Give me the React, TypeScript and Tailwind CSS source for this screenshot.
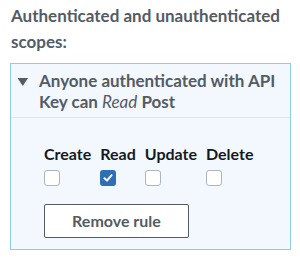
import React from "react";

function Box({ checked }: { checked?: boolean }) {
  if (checked) {
    return (
      <div className="w-[16px] h-[16px] rounded-[3px] bg-[#2f6fb5] flex items-center justify-center">
        <svg width="12" height="12" viewBox="0 0 12 12">
          <path d="M2.5 6.2 L5 8.6 L9.6 3.2" fill="none" stroke="#fff" strokeWidth="2" strokeLinecap="round" strokeLinejoin="round" />
        </svg>
      </div>
    );
  }
  return <div className="w-[16px] h-[16px] rounded-[3px] border border-[#aab7b8] bg-white" />;
}

export default function App() {
  const cols = [
    { label: "Create", checked: false },
    { label: "Read", checked: true },
    { label: "Update", checked: false },
    { label: "Delete", checked: false },
  ];
  return (
    <div className="w-[300px] h-[260px] bg-white pt-[3px] px-[10px] text-[#545b64] font-['Lato',sans-serif]">
      <div className="pl-[1px] text-[17px] font-bold leading-[26px]">
        Authenticated and unauthenticated scopes:
      </div>
      <div className="mt-[8px] w-[281px] border border-[#8dcde6] bg-[#f2f8fd]">
        <div className="flex pl-[6px] pr-[8px] pt-[6px] pb-[5px] border-b border-[#dde6ec]">
          <svg width="12" height="12" viewBox="0 0 12 12" className="mt-[6px] mr-[10px] shrink-0">
            <path d="M0.5 2 L11 2 L5.75 10 Z" fill="#545b64" />
          </svg>
          <div className="text-[17px] font-bold leading-[21px]">
            Anyone authenticated with API Key can <span className="italic font-normal">Read</span> Post
          </div>
        </div>
        <div className="pl-[33px] pt-[26px] pb-[11px]">
          <div className="flex gap-[9px]">
            {cols.map((c) => (
              <div key={c.label} className="flex flex-col">
                <div className="text-[16px] font-bold leading-[20px] text-[#16191f]">{c.label}</div>
                <div className="mt-[6px]">
                  <Box checked={c.checked} />
                </div>
              </div>
            ))}
          </div>
          <button className="mt-[18px] w-[145px] h-[34px] border border-[#545b64] rounded-[2px] bg-white text-[16px] font-bold text-[#545b64]">
            Remove rule
          </button>
        </div>
      </div>
    </div>
  );
}
